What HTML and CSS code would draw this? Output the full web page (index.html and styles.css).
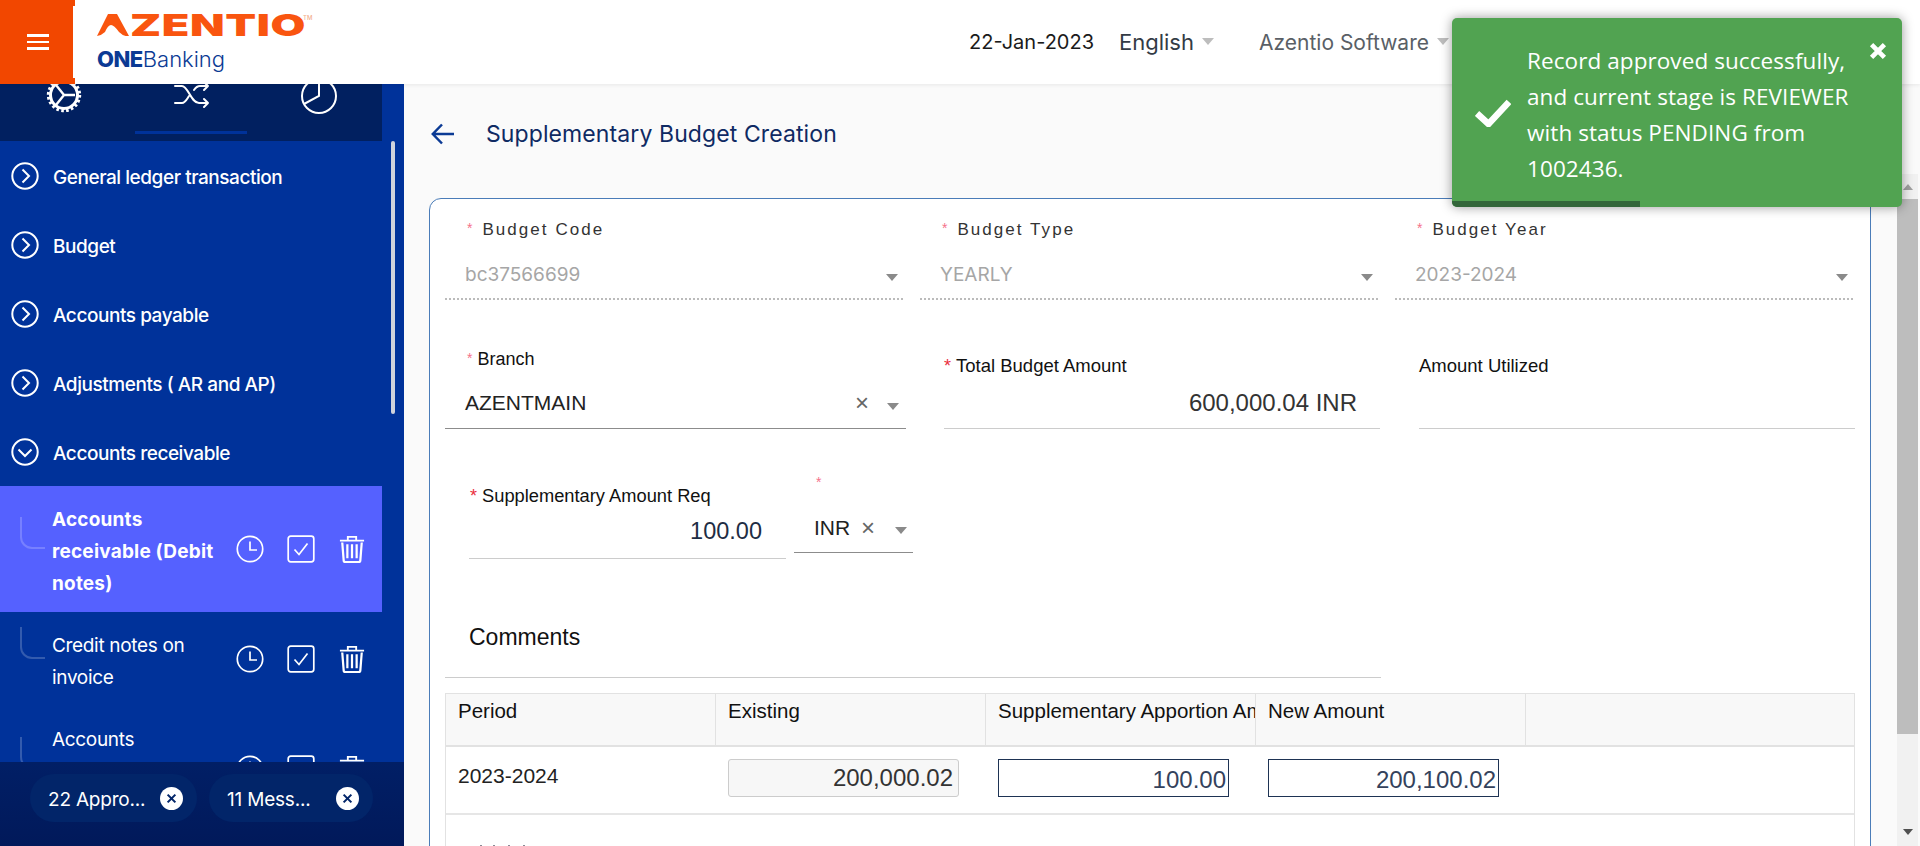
FILE: index.html
```html
<!DOCTYPE html>
<html lang="en">
<head>
<meta charset="utf-8">
<title>Supplementary Budget Creation</title>
<link rel="stylesheet" href="styles.css">
</head>
<body>
<header class="topbar">
  <button class="burger" aria-label="Menu"><span></span><span></span><span></span></button>
  <div class="logo">
    <div class="logo-main"><svg class="logo-a" viewBox="0 0 32 22"><path d="M0 22 L11 0 H20 L32 22 Q27 23 22 18 Q17 11 14 11 Q11 11 8 18 Q5 21 0 22 Z" fill="#f9550f"/></svg><span>ZENTIO</span><sup>TM</sup></div>
    <div class="logo-sub"><b>ONE</b>Banking</div>
  </div>
  <div class="top-right">
    <span class="date">22-Jan-2023</span>
    <span class="lang">English<i class="caret"></i></span>
    <span class="company">Azentio Software<i class="caret"></i></span>
  </div>
</header>
<div class="shell">
  <aside class="sidebar">
    <div class="tabs">
      <div class="tab"><svg viewBox="0 0 36 36" width="36" height="36" fill="none" stroke="#fff"><circle cx="18" cy="18" r="13.5" stroke-width="3"/><circle cx="18" cy="18" r="15.5" stroke-width="3.4" stroke-dasharray="2.6 2.27"/><path d="M18 18 L10 8 M18 18 L29 18 M18 18 L10 28" stroke-width="2.4"/></svg></div>
      <div class="tab tab-on"><svg viewBox="0 0 36 36" width="36" height="36" fill="none" stroke="#fff" stroke-width="2" stroke-linecap="round" stroke-linejoin="round"><path d="M1 9 H8 C14 9 17 26 25 26 H34 M1 26 H8 C11 26 13 22 15 19 M20 13 C22 10 24 9 26 9 H34 M30 5 L34 9 L30 13 M30 22 L34 26 L30 30"/></svg></div>
      <div class="tab"><svg viewBox="0 0 38 38" width="38" height="38" fill="none" stroke="#fff" stroke-width="2"><circle cx="19" cy="19" r="17"/><path d="M19 2 V19 L4 27"/></svg></div>
    </div>
    <nav class="menu">
      <div class="group"><svg class="chev" viewBox="0 0 28 28"><circle cx="14" cy="14" r="12.7"/><path d="M11.5 7.5 L18 14 L11.5 20.5"/></svg><span>General ledger transaction</span></div>
      <div class="group"><svg class="chev" viewBox="0 0 28 28"><circle cx="14" cy="14" r="12.7"/><path d="M11.5 7.5 L18 14 L11.5 20.5"/></svg><span>Budget</span></div>
      <div class="group"><svg class="chev" viewBox="0 0 28 28"><circle cx="14" cy="14" r="12.7"/><path d="M11.5 7.5 L18 14 L11.5 20.5"/></svg><span>Accounts payable</span></div>
      <div class="group"><svg class="chev" viewBox="0 0 28 28"><circle cx="14" cy="14" r="12.7"/><path d="M11.5 7.5 L18 14 L11.5 20.5"/></svg><span>Adjustments ( AR and AP)</span></div>
      <div class="group"><svg class="chev" viewBox="0 0 28 28"><circle cx="14" cy="14" r="12.7"/><path d="M7.5 11.5 L14 18 L20.5 11.5"/></svg><span>Accounts receivable</span></div>

      <div class="sub sub-active">
        <i class="branch"></i>
        <span class="sub-label">Accounts receivable (Debit notes)</span>
        <div class="sub-icons">
          <svg viewBox="0 0 28 28"><circle cx="14" cy="14" r="12.7"/><path d="M14 6.5 V15 H21"/></svg>
          <svg viewBox="0 0 28 28"><rect x="1.2" y="1.2" width="25.6" height="25.6" rx="2.5"/><path d="M7.5 14.5 L12 19.5 L20.5 8.5"/></svg>
          <svg viewBox="0 0 28 30" class="trash"><path d="M1 6 H27 M9.5 5 V2 H18.500 V5" /><path class="fat" d="M3.500 8 L5 27 Q5 29 7 29 H21 Q23 29 23 27 L24.500 8 M9 10 V25 M14 10 V25 M19 10 V25"/></svg>
        </div>
      </div>
      <div class="sub">
        <i class="branch"></i>
        <span class="sub-label">Credit notes on invoice</span>
        <div class="sub-icons">
          <svg viewBox="0 0 28 28"><circle cx="14" cy="14" r="12.7"/><path d="M14 6.5 V15 H21"/></svg>
          <svg viewBox="0 0 28 28"><rect x="1.2" y="1.2" width="25.6" height="25.6" rx="2.5"/><path d="M7.5 14.5 L12 19.5 L20.5 8.5"/></svg>
          <svg viewBox="0 0 28 30" class="trash"><path d="M1 6 H27 M9.5 5 V2 H18.500 V5" /><path class="fat" d="M3.500 8 L5 27 Q5 29 7 29 H21 Q23 29 23 27 L24.500 8 M9 10 V25 M14 10 V25 M19 10 V25"/></svg>
        </div>
      </div>
      <div class="sub">
        <i class="branch"></i>
        <span class="sub-label">Accounts receivable (Credit notes)</span>
        <div class="sub-icons">
          <svg viewBox="0 0 28 28"><circle cx="14" cy="14" r="12.7"/><path d="M14 6.5 V15 H21"/></svg>
          <svg viewBox="0 0 28 28"><rect x="1.2" y="1.2" width="25.6" height="25.6" rx="2.5"/><path d="M7.5 14.5 L12 19.5 L20.5 8.5"/></svg>
          <svg viewBox="0 0 28 30" class="trash"><path d="M1 6 H27 M9.5 5 V2 H18.500 V5" /><path class="fat" d="M3.500 8 L5 27 Q5 29 7 29 H21 Q23 29 23 27 L24.500 8 M9 10 V25 M14 10 V25 M19 10 V25"/></svg>
        </div>
      </div>
      <i class="menu-thumb"></i>
    </nav>
    <div class="tray">
      <div class="chip chip-a"><span>22 Appro...</span><svg viewBox="0 0 22 22"><circle cx="11" cy="11" r="11"/><path d="M7.300 7.300 L14.700 14.700 M14.700 7.300 L7.300 14.700"/></svg></div>
      <div class="chip chip-b"><span>11 Mess...</span><svg viewBox="0 0 22 22"><circle cx="11" cy="11" r="11"/><path d="M7.300 7.300 L14.700 14.700 M14.700 7.300 L7.300 14.700"/></svg></div>
    </div>
  </aside>

  <main class="content">
    <div class="page-head">
      <svg class="back" viewBox="0 0 24 24"><path d="M23 12 H2 M11 2.500 L1.800 12 L11 21.500"/></svg>
      <h1>Supplementary Budget Creation</h1>
    </div>
    <section class="card">
      <div class="row row-ro">
        <div class="field ro"><label><em>*</em>Budget Code</label><div class="val"><span>bc37566699</span><i class="arrow"></i></div></div>
        <div class="field ro"><label><em>*</em>Budget Type</label><div class="val"><span>YEARLY</span><i class="arrow"></i></div></div>
        <div class="field ro"><label><em>*</em>Budget Year</label><div class="val"><span>2023-2024</span><i class="arrow"></i></div></div>
      </div>
      <div class="row row-2">
        <div class="field sel"><label><em>*</em>Branch</label><div class="val"><span>AZENTMAIN</span><b class="x">×</b><i class="arrow"></i></div></div>
        <div class="field num"><label><em class="big">*</em>Total Budget Amount</label><div class="val"><span>600,000.04 INR</span></div></div>
        <div class="field num"><label>Amount Utilized</label><div class="val"><span></span></div></div>
      </div>
      <div class="row-3">
        <div class="field num req"><label><em class="big">*</em>Supplementary Amount Req</label><div class="val"><span>100.00</span></div></div>
        <div class="field sel cur"><label><em>*</em></label><div class="val"><span>INR</span><b class="x">×</b><i class="arrow"></i></div></div>
      </div>
      <div class="comments"><span>Comments</span></div>
      <div class="grid">
        <div class="g-head">
          <div>Period</div><div>Existing</div><div>Supplementary Apportion Amount</div><div>New Amount</div><div></div>
        </div>
        <div class="g-row">
          <div class="g-period">2023-2024</div>
          <div><div class="inp inp-off">200,000.02</div></div>
          <div><div class="inp">100.00</div></div>
          <div><div class="inp">200,100.02</div></div>
          <div></div>
        </div>
        <div class="g-foot"><i></i><i></i><i></i><i></i></div>
      </div>
    </section>
    <div class="scroll"><i class="up"></i><i class="thumb"></i><i class="down"></i></div>
  </main>
</div>

<div class="toast">
  <svg class="t-check" viewBox="0 0 36 28"><path d="M2 14.500 L13.500 25 L34 3"/></svg>
  <p>Record approved successfully, and current stage is REVIEWER with status PENDING from 1002436.</p>
  <svg class="t-close" viewBox="0 0 14 14"><path d="M2 2 L12 12 M12 2 L2 12"/></svg>
  <i class="t-bar"></i>
</div>
</body>
</html>
```
FILE: styles.css
```css
* { box-sizing: border-box; }
html, body { margin: 0; height: 100%; overflow: hidden; }
body { font-family: Inter, "Liberation Sans", sans-serif; background: #fafafa; width: 1920px; height: 846px; position: relative; }

.topbar { height: 84px; background: #fff; display: flex; align-items: center; box-shadow: 0 1px 4px rgba(0,0,0,.08); position: relative; z-index: 3; }
.burger { width: 75px; height: 84px; background: #f24700; border: 0; padding: 0; display: flex; flex-direction: column; align-items: center; justify-content: center; gap: 4px; clip-path: polygon(0 0, 100% 0, 100% 7%, 73px 7%, 73px 93%, 100% 93%, 100% 100%, 0 100%); flex: none; }
.burger span { width: 22px; height: 2.500px; background: #fff; }
.logo { margin-left: 22px; width: 230px; display: flex; flex-direction: column; padding-top: 1px; flex: none; }
.logo-main { display: flex; align-items: center; height: 23px; color: #f9550f; font-size: 30px; font-weight: 900; line-height: 23px; font-family: Inter, sans-serif; }
.logo-a { width: 32px; height: 22px; flex: none; }
.logo-main span { display: inline-block; transform: scaleX(1.5); transform-origin: 0 50%; width: 115px; margin-left: 1px; letter-spacing: .4px; }
.logo-main sup { font-size: 6px; color: #f3b08f; font-weight: 500; align-self: flex-start; line-height: 8px; margin-left: 58px; letter-spacing: 0; }
.logo-sub { margin-top: 9px; font-size: 22px; line-height: 26px; color: #0b3a94; font-weight: 300; font-family: Inter, sans-serif; }
.logo-sub b { font-weight: 800; letter-spacing: -.5px; }
.top-right { margin-left: 642px; display: flex; align-items: center; white-space: nowrap; }
.date { color: #1b1b1b; width: 150px; font-size: 20px; }
.lang { color: #333b45; width: 140px; display: flex; align-items: center; font-size: 22px; }
.company { color: #5a5f66; display: flex; align-items: center; font-size: 21px; }
.caret { width: 0; height: 0; border-left: 6.5px solid transparent; border-right: 6.5px solid transparent; border-top: 7px solid #bdbdbd; margin-left: 8px; margin-top: -1px; }

.shell { display: flex; height: 762px; position: relative; }
.sidebar { width: 404px; background: #00329a; display: flex; flex-direction: column; flex: none; height: 762px; }
.tabs { width: 382px; height: 57px; background: #012060; display: flex; flex: none; position: relative; }
.tab { width: 127px; height: 57px; display: flex; justify-content: center; position: relative; }
.tab svg { margin-top: -7px; }
.tab:first-child { width: 128px; }
.tab-on::after { content: ""; position: absolute; left: 7px; width: 112px; bottom: 7px; height: 3px; background: #00329a; }
.menu { flex: 1; position: relative; overflow: hidden; }
.menu-thumb { position: absolute; left: 391px; top: 0; width: 4px; height: 273px; border-radius: 2px; background: #cfd3dc; }
.group { height: 69px; display: flex; align-items: center; gap: 14px; padding-left: 11px; color: #fff; font-size: 19px; font-weight: 500; letter-spacing: -.45px; }
.group span { padding-top: 4px; }
.chev { width: 28px; height: 28px; flex: none; fill: none; stroke: #fff; stroke-width: 2; }
.sub { width: 382px; display: flex; align-items: center; position: relative; padding: 15px 0 15px 52px; color: #fff; font-size: 19px; letter-spacing: -.33px; line-height: 32px; }
.sub-label { width: 178px; flex: none; padding: 3px 6px 0 0; margin-bottom: -3px; }
.sub-active { background: #5561ff; font-weight: 700; letter-spacing: .2px; }
.sub-icons { display: flex; gap: 23px; margin-left: 6px; align-items: center; }
.sub-icons svg { width: 28px; height: 28px; fill: none; stroke: #fff; stroke-width: 1.700; flex: none; }
.sub-icons .trash { width: 26px; height: 30px; stroke-width: 2; margin-left: 1px; }
.sub-icons .trash .fat { stroke-width: 2.400; }
.branch { position: absolute; left: 20px; top: 50%; margin-top: -32px; width: 25px; height: 32px; border-left: 2px solid rgba(255,255,255,.2); border-bottom: 2px solid rgba(255,255,255,.2); border-bottom-left-radius: 12px; }
.tray { height: 84px; flex: none; background: linear-gradient(#011f66, #01195a); display: flex; padding: 12px 0 0 30px; gap: 12px; position: relative; }
.chip { height: 48px; border-radius: 24px; background: #022569; display: flex; align-items: center; color: #fff; font-size: 19px; letter-spacing: -.2px; }
.chip-a { width: 167px; padding-left: 18px; }
.chip-b { width: 164px; padding-left: 18px; }
.chip span { flex: 1; white-space: nowrap; padding-top: 2px; }
.chip svg { width: 23px; height: 23px; margin-right: 14px; flex: none; }
.chip svg circle { fill: #fff; }
.chip svg path { stroke: #022569; stroke-width: 2; fill: none; }

.content { flex: 1; position: relative; height: 762px; overflow: hidden; background: #fafafa; }
.page-head { height: 114px; display: flex; align-items: flex-start; padding: 37px 0 0 27px; }
.back { width: 24px; height: 24px; fill: none; stroke: #0b3a94; stroke-width: 2.500; flex: none; margin-top: 1px; }
h1 { margin: 1px 0 0 31px; font-size: 23px; font-weight: 400; line-height: 24px; color: #0f2a63; letter-spacing: .1px; white-space: nowrap; }
.card { margin-left: 25px; width: 1442px; height: 700px; background: #fff; border: 1px solid #4a7cb8; border-radius: 12px 0 0 0; padding: 0 0 0 15px; font-family: "Liberation Sans", sans-serif; }

.row { display: flex; }
.row-ro { height: 99px; gap: 17px; }
.row-ro .field { width: 458px; }
.field { position: relative; }
.field label { display: block; white-space: nowrap; }
.field em { font-style: normal; }
.ro label { padding: 18px 0 0 22px; font-size: 17px; line-height: 22px; letter-spacing: 2.050px; color: #333; }
.ro em { font-size: 14px; margin-right: 10px; color: #f5728a; vertical-align: 2px; letter-spacing: 0; }
.val { display: flex; align-items: center; }
.ro .val { height: 50px; margin-top: 9px; border-bottom: 2px dotted #bbb; padding: 0 5px 0 20px; color: #a6a6a6; font-family: Inter, sans-serif; font-size: 19px; }
.val span { flex: 1; }
.arrow { width: 0; height: 0; border-left: 6.5px solid transparent; border-right: 6.5px solid transparent; border-top: 7px solid #8a8a8a; margin-top: 6px; }
.x { font-weight: 400; font-size: 24px; color: #666; margin-right: 18px; line-height: 18px; }

.row-2 { height: 148px; gap: 39px; align-items: flex-start; }
.row-2 .sel { width: 461px; margin-right: -1px; }
.sel label { padding: 49px 0 0 22px; font-size: 18px; line-height: 22px; color: #111; }
.sel em { font-size: 14px; margin-right: 5px; color: #f5728a; vertical-align: 2px; }
.sel .val { height: 59px; padding: 8px 7px 0 20px; border-bottom: 1px solid #8c8c8c; font-size: 21px; color: #222; }
.num { width: 436px; }
.num label { padding-top: 57px; font-size: 18.500px; line-height: 22px; color: #111; }
.num .big { font-size: 18px; margin-right: 5px; color: #ea2e40; }
.num .val { height: 52px; border-bottom: 1px solid #ccc; padding-right: 23px; text-align: right; font-size: 24px; color: #333; }
.row-3 { display: flex; align-items: flex-start; margin-left: 24px; height: 117px; }
.req { width: 317px; margin-right: 8px; }
.num.req label { padding-top: 39px; padding-left: 1px; font-size: 18.300px; }
.num.req .big { margin-right: 5px; }
.num.req .val { height: 52px; padding: 0 24px 3px 0; color: #1e2d44; font-size: 23.500px; }
.cur { width: 119px; }
.cur label { padding: 25px 0 0 22px; height: 47px; }
.cur em { display: inline-block; margin: 0; }
.sel.cur .val { height: 60px; padding: 11px 6px 0 20px; font-size: 21px; }
.cur .x { margin-right: 20px; }
.cur .arrow { margin-top: 4px; }
.comments { width: 936px; height: 115px; border-bottom: 1px solid #ccc; padding: 59px 0 0 24px; font-size: 23px; line-height: 30px; color: #111; }

.grid { margin-top: 15px; width: 1410px; border: 1px solid #e2e2e2; border-bottom: 0; height: 200px; font-size: 20.500px; color: #111; }
.g-head, .g-row { display: grid; grid-template-columns: 270px 270px 270px 270px 1fr; }
.g-head { height: 53px; background: #f8f8f8; border-bottom: 2px solid #e2e2e2; }
.g-head > div { padding: 5px 12px; border-right: 1px solid #e2e2e2; line-height: 24px; white-space: nowrap; overflow: hidden; }
.g-head > div:nth-child(3) { padding-right: 0; }
.g-head > div:last-child { border-right: 0; }
.g-row { height: 68px; border-bottom: 2px solid #e6e6e6; }
.g-row > div { padding: 12px 0 0 12px; }
.g-row > .g-period { padding-top: 17px; line-height: 24px; color: #222; font-size: 21px; }
.inp { width: 231px; height: 38px; border: 1.500px solid #1e3354; text-align: right; padding: 3.500px 2px 0 0; font-size: 24px; line-height: 32px; color: #34425c; }
.inp-off { border: 1px solid #ccc; border-radius: 3px; background: #f7f7f7; color: #333; line-height: 36px; padding: 0 5px 0 0; }
.g-foot { padding: 30px 0 0 34px; display: flex; }
.g-foot i { width: 2px; height: 1px; background: #8a8a96; margin-right: 11px; }
.g-foot i:nth-child(n+2) { margin-right: 13px; }

.scroll { position: absolute; right: 2px; top: 90px; width: 21px; height: 672px; background: #f1f1f1; display: flex; flex-direction: column; align-items: center; }
.scroll .up { width: 0; height: 0; flex: none; margin-top: 10px; border-left: 5px solid transparent; border-right: 5px solid transparent; border-bottom: 6px solid #a0a0a0; }
.scroll .thumb { width: 21px; height: 535px; flex: none; background: #bdbdbd; margin-top: 9px; }
.scroll .down { width: 0; height: 0; flex: none; margin-top: 95px; border-left: 5px solid transparent; border-right: 5px solid transparent; border-top: 6px solid #505050; }

.toast { position: absolute; left: 1452px; top: 18px; width: 450px; height: 189px; z-index: 5; background: #51a351; border-radius: 5px; box-shadow: 0 0 12px rgba(0,0,0,.4); overflow: hidden; color: #fff; padding: 25px 35px 0 75px; }
.toast p { margin: 0; font-family: "Open Sans", sans-serif; font-size: 22.500px; line-height: 36px; letter-spacing: .08px; }
.t-check { position: absolute; left: 23px; top: 81px; width: 36px; height: 28px; fill: none; stroke: #fff; stroke-width: 6.500; }
.t-close { position: absolute; left: 417px; top: 24px; width: 18px; height: 18px; fill: none; stroke: #fff; stroke-width: 3.600; }
.t-bar { position: absolute; left: 0; bottom: 0; width: 188px; height: 6px; background: #33663a; }
```
